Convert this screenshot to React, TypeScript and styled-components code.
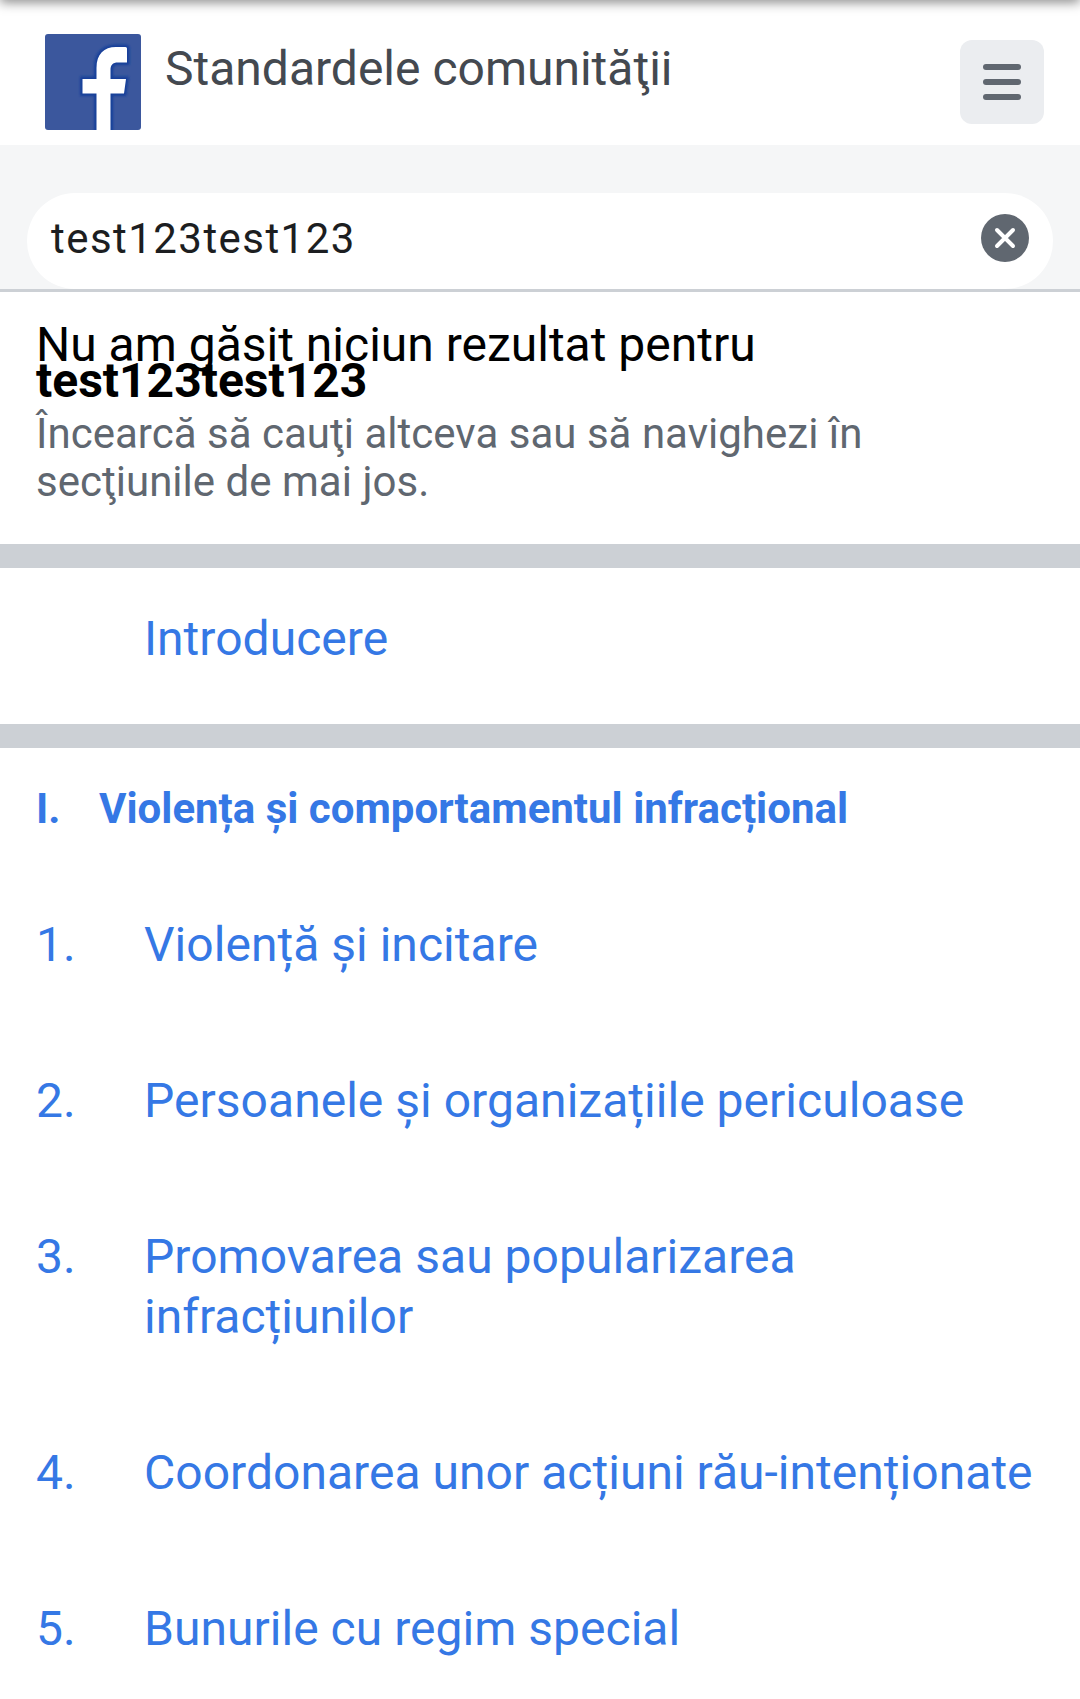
import React from "react";
import styled, { createGlobalStyle } from "styled-components";

const GlobalStyle = createGlobalStyle`
  *, *::before, *::after { box-sizing: border-box; }
  body { margin: 0; background: #fff; font-family: Roboto, "Noto Sans", sans-serif; }
`;

const Page = styled.div`
  position: relative;
  width: 1080px;
  height: 1699px;
  overflow: hidden;
  background: #fff;
`;

const TopShadow = styled.div`
  position: absolute;
  top: -12px;
  left: 0;
  right: 0;
  height: 12px;
  box-shadow: 0 2px 12px rgba(0, 0, 0, 0.5);
`;

const Header = styled.header`
  display: flex;
  align-items: flex-start;
  height: 145px;
  padding: 34px 36px 0 45px;
`;

const Logo = styled.svg`
  display: block;
  width: 96px;
  height: 96px;
`;

const Title = styled.h1`
  flex: 1;
  margin: 5px 0 0 24px;
  font-size: 48px;
  line-height: 60px;
  font-weight: 400;
  color: #444950;
`;

const MenuButton = styled.button`
  display: flex;
  flex-direction: column;
  align-items: center;
  justify-content: center;
  gap: 9px;
  width: 84px;
  height: 84px;
  margin-top: 6px;
  padding: 0;
  border: 0;
  border-radius: 12px;
  background: #ebedf0;
`;

const MenuLine = styled.span`
  width: 38px;
  height: 6px;
  border-radius: 3px;
  background: #606770;
`;

const SearchBar = styled.div`
  height: 147px;
  padding: 48px 27px 0;
  background: #f5f6f7;
  border-bottom: 3px solid #ccd0d5;
`;

const SearchField = styled.div`
  display: flex;
  align-items: center;
  height: 96px;
  padding: 0 24px;
  border-radius: 48px;
  background: #fff;
`;

const Query = styled.span`
  flex: 1;
  padding-bottom: 5px;
  font-size: 42px;
  line-height: 54px;
  letter-spacing: 1.45px;
  color: #1c1e21;
`;

const ClearIcon = styled.svg`
  width: 48px;
  height: 48px;
  margin-bottom: 6px;
`;

const Results = styled.section`
  height: 252px;
  padding: 35px 36px 0;
`;

const Message = styled.p`
  margin: 0;
  font-size: 48px;
  line-height: 36px;
  color: #000;
`;

const Term = styled.strong`
  display: block;
  font-weight: 700;
`;

const Hint = styled.p`
  width: 880px;
  margin: 11px 0 0;
  font-size: 42px;
  line-height: 48px;
  letter-spacing: 0.02px;
  color: #606770;
`;

const Divider = styled.div`
  height: 24px;
  background: #ccd0d5;
`;

const SectionHeading = styled.h2`
  display: flex;
  height: 126px;
  margin: 0;
  padding: 37px 36px 0;
  font-size: 42px;
  line-height: 48px;
  font-weight: 700;
  color: #3578e5;
`;

const Numeral = styled.span`
  width: 63px;
`;

const List = styled.div`
  display: flex;
  flex-direction: column;
`;

const Row = styled.a`
  display: flex;
  padding: 41px 36px 55px;
  font-size: 48px;
  line-height: 60px;
  letter-spacing: 0.03px;
  color: #3578e5;
  text-decoration: none;
`;

const Index = styled.span`
  flex: 0 0 108px;
`;

const Label = styled.span`
  flex: 1;
`;

const items = [
  "Violență și incitare",
  "Persoanele și organizațiile periculoase",
  "Promovarea sau popularizarea infracțiunilor",
  "Coordonarea unor acțiuni rău-intenționate",
  "Bunurile cu regim special",
];

const markPath =
  "M51.5 98V59.5H37.5V45H51.5V34C51.5 20 59 13 71 13H80.500Q82 13 82 14.500V28.500H73C67.500 28.500 65.500 31 65.500 36V45H81L79 59.500H65.500V98Z";

export default function App() {
  return (
    <Page>
      <GlobalStyle />
      <TopShadow />
      <Header>
        <Logo viewBox="0 0 96 96">
          <defs>
            <filter id="soft" x="-20%" y="-20%" width="140%" height="140%">
              <feGaussianBlur stdDeviation="1.2" />
            </filter>
            <filter id="edge">
              <feGaussianBlur stdDeviation="0.6" />
            </filter>
          </defs>
          <rect width="96" height="96" rx="3" fill="#3b579d" />
          <path d={markPath} fill="none" stroke="#16409a" strokeWidth="5" filter="url(#soft)" />
          <path d={markPath} fill="#fff" filter="url(#edge)" />
        </Logo>
        <Title>Standardele comunităţii</Title>
        <MenuButton aria-label="Meniu">
          <MenuLine />
          <MenuLine />
          <MenuLine />
        </MenuButton>
      </Header>
      <SearchBar>
        <SearchField>
          <Query>test123test123</Query>
          <ClearIcon viewBox="0 0 48 48">
            <circle cx="24" cy="24" r="24" fill="#606770" />
            <path d="M16 16L32 32M32 16L16 32" stroke="#fff" strokeWidth="4" strokeLinecap="round" />
          </ClearIcon>
        </SearchField>
      </SearchBar>
      <Results>
        <Message>
          Nu am găsit niciun rezultat pentru <Term>test123test123</Term>
        </Message>
        <Hint>Încearcă să cauţi altceva sau să navighezi în secţiunile de mai jos.</Hint>
      </Results>
      <Divider />
      <Row href="#">
        <Index />
        <Label>Introducere</Label>
      </Row>
      <Divider />
      <SectionHeading>
        <Numeral>I.</Numeral>
        <span>Violența și comportamentul infracțional</span>
      </SectionHeading>
      <List>
        {items.map((label, i) => (
          <Row href="#" key={label}>
            <Index>{i + 1}.</Index>
            <Label>{label}</Label>
          </Row>
        ))}
      </List>
    </Page>
  );
}
